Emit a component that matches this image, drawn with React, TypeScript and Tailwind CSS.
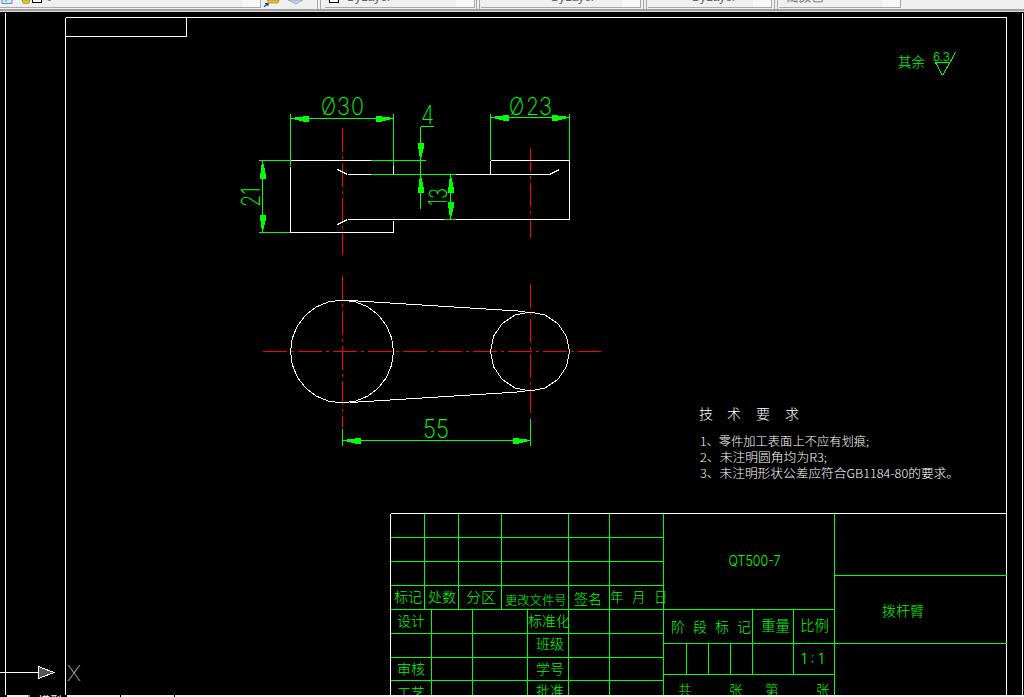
const G = "#00ff00";
const W = "#ffffff";
const R = "#ff0000";
const CJK = "'Noto Sans CJK SC', 'Liberation Sans', sans-serif";
const THIN = "Inter, 'Liberation Sans', sans-serif";

type L = [number, number, number, number];
const wl: L[] = [
  [5, 12, 5, 695], [1022, 12, 1022, 695],
  [65, 17, 1006, 17], [65, 17, 65, 695], [1006, 17, 1006, 695],
  [65, 36, 186, 36], [186, 17, 186, 36],
  // top view
  [290, 160, 370, 160], [290, 166, 290, 232], [290, 232, 393, 232], [393, 220, 393, 232], [393, 165, 393, 174],
  [347, 174, 370, 174], [455, 174, 549, 174], [347, 219, 569, 219],
  [490, 160, 569, 160], [490, 160, 490, 174], [569, 160, 569, 219],
  [337, 169, 347, 174], [337, 224, 347, 219], [549, 174, 559, 169],
  // title block
  [390, 513, 1006, 513], [390, 513, 390, 695],
  // bottom view tangents
  [349, 300, 525, 311], [350, 402, 525, 391],
];
const gl: L[] = [
  [290, 113, 290, 165], [393, 113, 393, 165], [490, 113, 490, 159], [569, 113, 569, 159],
  [290, 118, 393, 118], [490, 117, 569, 117],
  [370, 160, 425, 160], [370, 174, 455, 174],
  [420, 126, 433, 126], [420, 126, 420, 208], [450, 174, 450, 219], [443, 219, 455, 219], [443, 174, 455, 174],
  [262, 160, 262, 232], [258, 160, 290, 160], [258, 232, 289, 232],
  [342, 428, 342, 445], [530, 418, 530, 445], [342, 440, 530, 440],
  // title block
  [424, 513, 424, 609], [458, 513, 458, 609], [501, 513, 501, 609],
  [568, 513, 568, 695], [609, 513, 609, 695], [663, 513, 663, 695], [834, 513, 834, 695],
  [431, 609, 431, 695], [472, 609, 472, 695], [527, 609, 527, 695],
  [390, 537, 663, 537], [390, 561, 663, 561], [390, 585, 663, 585], [390, 609, 834, 609],
  [390, 633, 663, 633], [390, 657, 663, 657], [390, 680, 663, 680],
  [834, 575, 1006, 575], [663, 643, 1006, 643], [663, 674, 834, 674],
  [752, 609, 752, 674], [793, 609, 793, 674],
  [686, 643, 686, 674], [708, 643, 708, 674], [730, 643, 730, 674],
  // roughness mark
  [935, 62, 949, 62], [935, 62, 942, 75], [942, 75, 955, 52],
];

const ngon = (cx: number, cy: number, r: number, n: number, a0: number) =>
  Array.from({ length: n }, (_, i) => {
    const a = a0 + (i * 2 * Math.PI) / n;
    return `${(cx + r * Math.cos(a)).toFixed(1)},${(cy + r * Math.sin(a)).toFixed(1)}`;
  }).join(" ");

// arrow from tip along direction (dx,dy)
function Arrow({ x, y, dx, dy }: { x: number; y: number; dx: number; dy: number }) {
  const p = (along: number, side: number) =>
    `${x + 0.5 + dx * along - dy * side},${y + 0.5 + dy * along + dx * side}`;
  return (
    <polygon
      fill={G}
      points={[p(0, 0), p(8, 2), p(12, 2), p(12, 3), p(18, 3), p(18, -3), p(12, -3), p(12, -2), p(8, -2)].join(" ")}
    />
  );
}

function T({ x, y, s, len, c = G, f = CJK, w = 300, children, rot }: {
  x: number; y: number; s: number; len?: number; c?: string; f?: string; w?: number; children: string; rot?: number;
}) {
  return (
    <text
      x={x}
      y={y}
      fontSize={s}
      fill={c}
      fontFamily={f}
      fontWeight={w}
      textLength={len}
      lengthAdjust={len ? "spacingAndGlyphs" : undefined}
      transform={rot ? `rotate(${rot} ${x} ${y})` : undefined}
    >
      {children}
    </text>
  );
}

function Drawing() {
  return (
    <svg viewBox="0 12 1024 683" width={1024} height={683} className="block">
      <g shapeRendering="crispEdges">
        {/* red centre lines */}
        <g stroke={R} fill="none">
          <line x1={342.5} y1={128} x2={342.5} y2={255} strokeDasharray="24 4 3 4" />
          <line x1={530.5} y1={148} x2={530.5} y2={238} strokeDasharray="24 4 3 4" />
          <line x1={342.5} y1={276} x2={342.5} y2={428} strokeDasharray="24 4 3 4" />
          <line x1={530.5} y1={284} x2={530.5} y2={418} strokeDasharray="24 4 3 4" />
          <line x1={263} y1={351.5} x2={601} y2={351.5} strokeDasharray="24 4 3 4" />
        </g>
        <g stroke={W} fill="none">
          <polygon points={ngon(342, 351.5, 51.5, 24, 0)} />
          <polygon points={ngon(530, 351.5, 39.5, 16, 0)} />
          {wl.map((l, i) => (
            <line key={i} x1={l[0] + 0.5} y1={l[1] + 0.5} x2={l[2] + 0.5} y2={l[3] + 0.5} />
          ))}
        </g>
        <g stroke={G} fill="none">
          {gl.map((l, i) => (
            <line key={i} x1={l[0] + 0.5} y1={l[1] + 0.5} x2={l[2] + 0.5} y2={l[3] + 0.5} />
          ))}
        </g>
        <Arrow x={290} y={118} dx={1} dy={0} />
        <Arrow x={393} y={118} dx={-1} dy={0} />
        <Arrow x={490} y={117} dx={1} dy={0} />
        <Arrow x={569} y={117} dx={-1} dy={0} />
        <Arrow x={420} y={160} dx={0} dy={-1} />
        <Arrow x={420} y={174} dx={0} dy={1} />
        <Arrow x={450} y={174} dx={0} dy={1} />
        <Arrow x={450} y={219} dx={0} dy={-1} />
        <Arrow x={262} y={160} dx={0} dy={1} />
        <Arrow x={262} y={232} dx={0} dy={-1} />
        <Arrow x={342} y={440} dx={1} dy={0} />
        <Arrow x={530} y={440} dx={-1} dy={0} />
        {/* UCS icon */}
        <line x1={0} y1={672.5} x2={38} y2={672.5} stroke={W} />
        <polygon points="38.5,666.5 38.5,678.5 54,672.5" fill="#555555" stroke={W} />
      </g>

      <T x={321} y={115} s={25} len={15} f={THIN} w={200}>Ø</T>
      <T x={337} y={115} s={25} len={13} f={THIN} w={200}>3</T>
      <T x={351} y={115} s={25} len={13} f={THIN} w={200}>0</T>
      <T x={509} y={115} s={25} len={15} f={THIN} w={200}>Ø</T>
      <T x={526} y={115} s={25} len={13} f={THIN} w={200}>2</T>
      <T x={539} y={115} s={25} len={13} f={THIN} w={200}>3</T>
      <T x={421} y={124} s={26} len={13} f={THIN} w={200}>4</T>
      <T x={423} y={438} s={26} len={13} f={THIN} w={200}>5</T>
      <T x={436} y={438} s={26} len={13} f={THIN} w={200}>5</T>
      <T x={260} y={207} s={26} len={20} f={THIN} w={200} rot={-90}>21</T>
      <T x={447} y={206} s={25} len={18} f={THIN} w={200} rot={-90}>13</T>
      <T x={67} y={681} s={22} len={14} c={W} f={THIN} w={100}>X</T>

      <T x={898} y={67} s={13.5}>其余</T>
      <T x={933} y={61} s={11} len={17} f={THIN} w={300}>6.3</T>

      <T x={699} y={419} s={14} c={W}>技</T>
      <T x={727} y={419} s={14} c={W}>术</T>
      <T x={756} y={419} s={14} c={W}>要</T>
      <T x={785} y={419} s={14} c={W}>求</T>
      <T x={700} y={446} s={12} len={169} c={W}>1、零件加工表面上不应有划痕;</T>
      <T x={700} y={462} s={12} len={127} c={W}>2、未注明圆角均为R3;</T>
      <T x={700} y={478} s={12} len={259} c={W}>3、未注明形状公差应符合GB1184-80的要求。</T>

      <T x={394} y={602} s={14}>标记</T>
      <T x={428} y={602} s={14}>处数</T>
      <T x={466} y={602} s={14} len={30}>分区</T>
      <T x={505} y={605} s={12.3}>更改文件号</T>
      <T x={574} y={604} s={14}>签名</T>
      <T x={610} y={602} s={13.5}>年</T>
      <T x={632} y={602} s={13.5}>月</T>
      <T x={654} y={602} s={13.5}>日</T>
      <T x={397} y={626} s={14}>设计</T>
      <T x={528} y={626} s={14}>标准化</T>
      <T x={536} y={649} s={14}>班级</T>
      <T x={397} y={674} s={14}>审核</T>
      <T x={536} y={674} s={14}>学号</T>
      <T x={397} y={698} s={14}>工艺</T>
      <T x={536} y={696} s={14}>批准</T>

      <T x={728.5} y={566} s={15} len={52} f={THIN} w={300}>QT500-7</T>
      <T x={671} y={632} s={14}>阶</T>
      <T x={693} y={632} s={14}>段</T>
      <T x={715} y={632} s={14}>标</T>
      <T x={737} y={632} s={14}>记</T>
      <T x={761} y={631} s={14.5}>重量</T>
      <T x={800} y={631} s={14.5}>比例</T>
      <T x={801} y={664} s={14} f={THIN} w={300}>1 : 1</T>
      <T x={882} y={616} s={14}>拨杆臂</T>
      <T x={678} y={695} s={13.5}>共</T>
      <T x={729} y={695} s={13.5}>张</T>
      <T x={765} y={695} s={13.5}>第</T>
      <T x={816} y={695} s={13.5}>张</T>
    </svg>
  );
}

function Combo({ w, label, pad, swatch }: { w: string; label: string; pad: string; swatch?: boolean }) {
  return (
    <div className={`${w} h-[8px] shrink-0 flex overflow-hidden border-r border-b border-[#a8a8a8] bg-[#efefef]`}>
      <div className={`flex-1 flex items-start ${pad} overflow-hidden`}>
        {swatch && <span className="w-[10px] h-[12px] -mt-[9px] mr-[8px] border border-black bg-white shrink-0" />}
        <span className="-mt-[9px] text-[12px] leading-[12px] text-[#666666] font-['Liberation_Sans'] whitespace-nowrap">
          {label}
        </span>
      </div>
      <div className="w-[18px] bg-[#f7f7f7] shrink-0" />
    </div>
  );
}

function Grip({ w }: { w: string }) {
  return (
    <div className={`${w} h-[9px] shrink-0 flex justify-center gap-[2px]`}>
      <span className="w-[1px] bg-[#a8a8a8]" />
      <span className="w-[1px] bg-[#a8a8a8]" />
    </div>
  );
}

function Toolbar() {
  return (
    <div className="h-[12px] shrink-0 bg-[#efefef] overflow-hidden">
      <div className="h-[9px] flex items-start">
        <div className="w-[261px] h-[8px] shrink-0 flex overflow-hidden border-r border-b border-[#a8a8a8]">
          <div className="flex-1 flex items-start">
            <svg width={12} height={5} viewBox="0 0 12 5" className="shrink-0 ml-[1px]">
              <path d="M1 0V3.5H11V0M5 0V2" fill="#dbe6f2" stroke="#5d89b5" />
            </svg>
            <svg width={10} height={4} viewBox="0 0 10 4" className="shrink-0 ml-[8px]">
              <path d="M1 0 A4 4 0 0 0 9 0Z" fill="#d9cc33" stroke="#9a8f1c" strokeWidth={0.7} />
            </svg>
            <span className="w-[10px] h-[3px] ml-[1px] border-x border-b border-black bg-white shrink-0" />
            <span className="-mt-[9px] ml-[4px] text-[12px] leading-[12px] text-[#666666] font-['Liberation_Sans']">0</span>
          </div>
          <div className="w-[18px] bg-[#f7f7f7] shrink-0" />
        </div>
        <div className="w-[51px] h-[8px] shrink-0 flex items-start">
          <svg width={18} height={7} viewBox="0 0 18 7" className="shrink-0 ml-[2px]">
            <path d="M4 0H16L15 3H6Z" fill="#e8c23a" stroke="#a8861c" strokeWidth={0.7} />
            <path d="M1 7L5 3M2 3.5H5V6" fill="none" stroke="#1c3f78" strokeWidth={1.2} />
          </svg>
          <svg width={15} height={5} viewBox="0 0 15 5" className="shrink-0 ml-[7px]">
            <path d="M0 0H15L8 4Z" fill="#c4d2e2" stroke="#8aa0bc" strokeWidth={0.7} />
          </svg>
        </div>
        <Grip w="w-[13px]" />
        <Combo w="w-[150px]" label="ByLayer" pad="pl-[4px]" swatch />
        <Grip w="w-[6px]" />
        <Combo w="w-[160px]" label="ByLayer" pad="pl-[70px]" />
        <Grip w="w-[7px]" />
        <Combo w="w-[124px]" label="ByLayer" pad="pl-[44px]" />
        <Grip w="w-[7px]" />
        <Combo w="w-[122px]" label="随颜色" pad="pl-[8px]" />
      </div>
      <div className="h-[2px] bg-[#a0a0a0]" />
      <div className="h-[1px] bg-[#d8d8d8]" />
    </div>
  );
}

function Tabs() {
  return (
    <div className="h-[2px] shrink-0 flex overflow-hidden bg-[#efefef]">
      <div className="w-[7px] bg-black" />
      <div className="w-[21px] bg-[#efefef]" />
      <div className="w-[2px] bg-[#9a9a9a]" />
      <div className="w-[37px] bg-black text-white text-[12px] leading-[12px] pl-[8px] font-['Noto_Sans_CJK_SC'] overflow-hidden">模型</div>
      <div className="w-[53px] bg-[#efefef]" />
      <div className="w-[1px] bg-black" />
      <div className="w-[53px] bg-[#efefef]" />
      <div className="w-[1px] bg-black" />
      <div className="flex-1 bg-[#efefef]" />
    </div>
  );
}

export default function App() {
  return (
    <div className="w-[1024px] h-[697px] flex flex-col overflow-hidden bg-black">
      <Toolbar />
      <div className="flex-1 overflow-hidden">
        <Drawing />
      </div>
      <Tabs />
    </div>
  );
}
